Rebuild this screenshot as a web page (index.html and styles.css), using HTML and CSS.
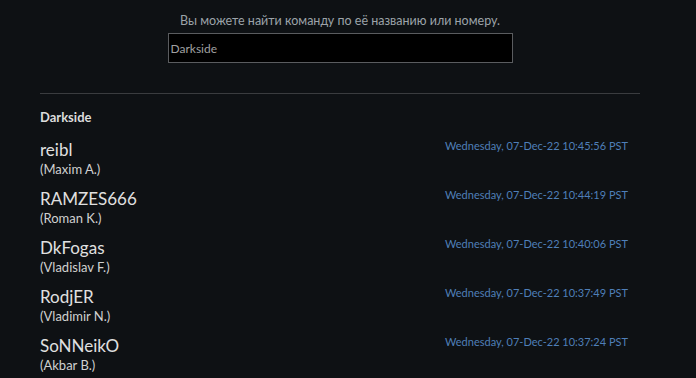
FILE: index.html
```html
<!DOCTYPE html>
<html lang="ru">
  <head>
    <meta charset="utf-8" />
    <title>Поиск команды</title>
    <meta name="viewport" content="width=device-width, initial-scale=1" />
    <link rel="stylesheet" href="styles.css">
  </head>
  <body>
    <div class="page">
      <div class="search">
        <div class="search-hint">Вы можете найти команду по её названию или номеру.</div>
        <input class="search-input" type="text" value="Darkside" />
      </div>

      <div class="team">
        <h3 class="team-name">Darkside</h3>
        <div class="member">
          <div>
            <div class="nick">reibl</div>
            <div class="real-name">(Maxim A.)</div>
          </div>
          <div class="seen">Wednesday, 07-Dec-22 10:45:56 PST</div>
        </div>
        <div class="member">
          <div>
            <div class="nick">RAMZES666</div>
            <div class="real-name">(Roman K.)</div>
          </div>
          <div class="seen">Wednesday, 07-Dec-22 10:44:19 PST</div>
        </div>
        <div class="member">
          <div>
            <div class="nick">DkFogas</div>
            <div class="real-name">(Vladislav F.)</div>
          </div>
          <div class="seen">Wednesday, 07-Dec-22 10:40:06 PST</div>
        </div>
        <div class="member">
          <div>
            <div class="nick">RodjER</div>
            <div class="real-name">(Vladimir N.)</div>
          </div>
          <div class="seen">Wednesday, 07-Dec-22 10:37:49 PST</div>
        </div>
        <div class="member">
          <div>
            <div class="nick">SoNNeikO</div>
            <div class="real-name">(Akbar B.)</div>
          </div>
          <div class="seen">Wednesday, 07-Dec-22 10:37:24 PST</div>
        </div>
      </div>
    </div>
  </body>
</html>
```

FILE: styles.css
```css
body {
  margin: 0;
  background: #0e1114;
  color: #d6d6d6;
  font-family: Lato, "Open Sans", sans-serif;
}
.page {
  width: 600px;
  margin: 0 0 0 40px;
  padding-top: 13px;
}
.search {
  display: flex;
  flex-direction: column;
  align-items: center;
  padding-bottom: 30px;
  border-bottom: 1px solid #3a3c3f;
}
.search-hint {
  font-size: 12.5px;
  color: #9ca3a9;
  margin-bottom: 5px;
}
.search-input {
  box-sizing: border-box;
  width: 345px;
  height: 30px;
  background: #000;
  border: 1px solid #5a5c5f;
  color: #a0a0a0;
  font-family: inherit;
  font-size: 12px;
  padding: 0 2px;
  outline: none;
}
.team-name {
  margin: 15px 0 14px;
  font-size: 13px;
  font-weight: bold;
  color: #dcdcdc;
}
.member {
  display: flex;
  justify-content: space-between;
  align-items: flex-start;
  padding-right: 12px;
  height: 49px;
}
.nick {
  font-size: 17px;
  line-height: 22px;
  color: #e0e0e0;
}
.real-name {
  font-size: 13px;
  line-height: 16px;
  color: #d0d0d0;
}
.seen {
  font-size: 11px;
  color: #4f7fb8;
}
```
